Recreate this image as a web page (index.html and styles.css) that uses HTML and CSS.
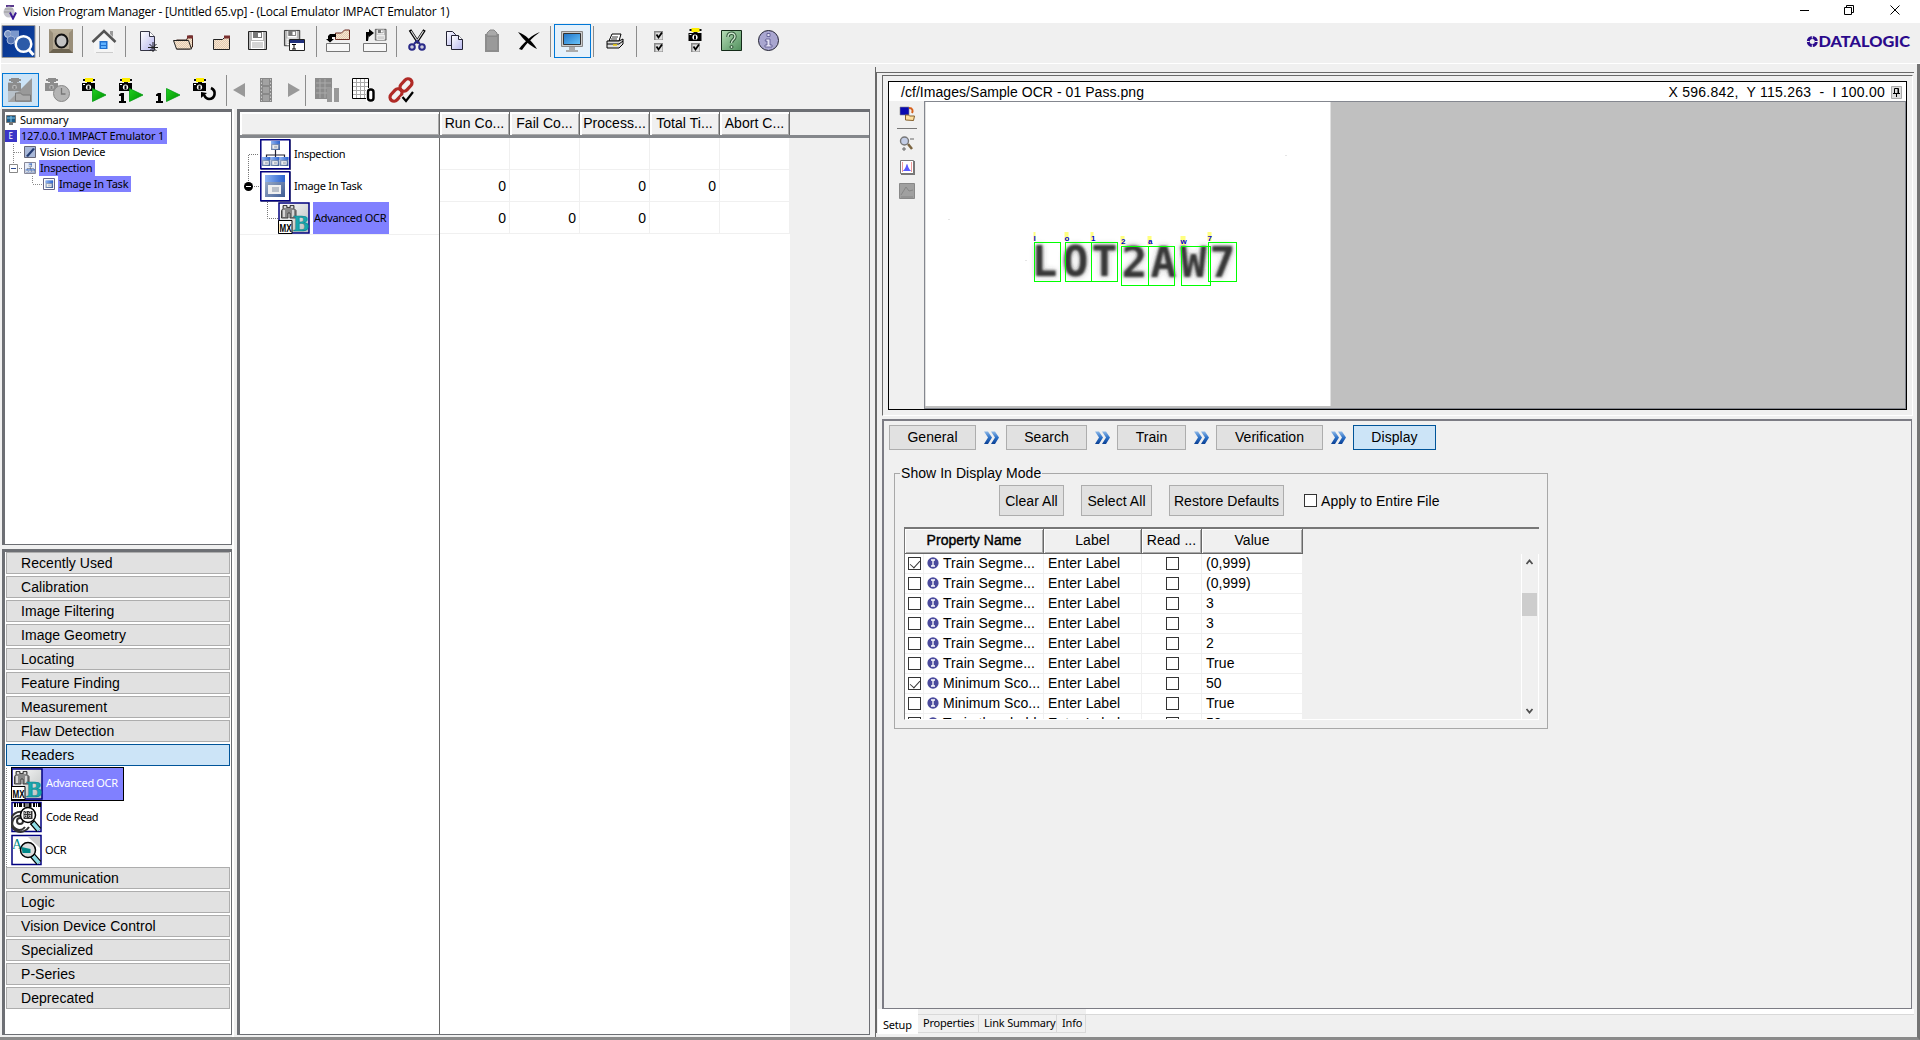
FILE: index.html
```html
<!DOCTYPE html>
<html lang="en">
<head>
<meta charset="utf-8">
<title>Vision Program Manager</title>
<link rel="stylesheet" href="styles.css">
</head>
<body>
<svg class="defs" width="0" height="0">
  <defs>
    <g id="cam">
      <path d="M1 1h12v2H1z" fill="#111"/><path d="M3 0h8v4H3z" fill="#ffef00"/>
      <path d="M5 4h4v1H5z" fill="#111"/><path d="M0 5h13v8H0z" fill="#000"/>
      <circle cx="6.5" cy="9.2" r="2.6" fill="#fff"/><path d="M5.5 7.5h2v4h-2z" fill="#000"/><path d="M1 6h2v1H1z" fill="#fff"/>
    </g>
    <g id="camgray">
      <path d="M1 1h12v2H1zM3 0h8v4H3zM5 4h4v1H5z" fill="#8c8c8c"/><path d="M0 5h13v8H0z" fill="#8c8c8c"/>
      <circle cx="6.5" cy="9.2" r="2.4" fill="#b8b8b8"/><path d="M5.5 8h2v3h-2z" fill="#808080"/>
    </g>
    <linearGradient id="greeng" x2="1" y2="1"><stop offset="0" stop-color="#20d020"/><stop offset="1" stop-color="#009000"/></linearGradient>
    <path id="play" d="M0.5 0.5L14 7L0.5 13.5z" fill="url(#greeng)" stroke="#009a10" stroke-width=".8"/>
    <path id="one" d="M2 0h3v8h2v2H0V8h2V3H0V1.500z" fill="#000"/>
    <g id="chk"><path d="M0 0h9v9H0z" fill="#888"/><path d="M1.500 1.500h7v7h-7z" fill="#ddd"/><path d="M2.500 3.500l2 3L8 1.500" stroke="#000" stroke-width="1.800" fill="none"/></g>
    <linearGradient id="winbody" x2="1" y2="1"><stop offset="0" stop-color="#a9b8cf"/><stop offset="1" stop-color="#3e5c94"/></linearGradient>
    <linearGradient id="winbar" x2="1"><stop offset="0" stop-color="#8fb4f2"/><stop offset="1" stop-color="#2a62cf"/></linearGradient>
    <g id="win"><path d="M0 0h20v22H0z" fill="url(#winbody)"/><path d="M0 0h20v7H0z" fill="url(#winbar)"/><path d="M3 10h13v9H3z" fill="#f0f0f0"/><path d="M7 12h7v5H7z" fill="#b9bfc8"/></g>
    <g id="tasks"><path d="M13.500 9v5M4.500 17v-3h18v3M13.500 14v3" fill="none" stroke="#223" stroke-width="1.200"/>
      <use href="#win" transform="translate(9 0) scale(.45 .41)"/><use href="#win" transform="translate(0 16) scale(.42 .41)"/><use href="#win" transform="translate(9 16) scale(.42 .41)"/><use href="#win" transform="translate(18 16) scale(.42 .41)"/></g>
    <linearGradient id="ocrbg" x2="1" y2="1"><stop offset="0" stop-color="#fff"/><stop offset="1" stop-color="#b9bdbd"/></linearGradient>
    <g id="mxocr">
      <path d="M1 1h30v30H1z" fill="url(#ocrbg)" stroke="#000080" stroke-width="1.500"/>
      <path d="M5 3.500h4v2h3v-2h4v3l2 2v7.500h-6v-5h-2v5H3.500V8.500l1.500-2z" fill="#888" stroke="#333" stroke-width=".9"/>
      <path d="M6 8v7M15 8v7M7 4v2M14 4v2" stroke="#eee" stroke-width="1.500"/>
      <text x="15" y="29" font-family="Liberation Serif" font-weight="bold" font-size="24" fill="#18a8ae" stroke="#0c7f88" stroke-width=".5">B</text>
      <path d="M.5 18.500h13.500v13H.5z" fill="#fff" stroke="#000"/>
      <text x="1.500" y="30" font-family="Liberation Sans" font-weight="bold" font-size="11" textLength="12" lengthAdjust="spacingAndGlyphs" fill="#000">MX</text>
    </g>
    <linearGradient id="chevg" x2="0" y2="1"><stop offset="0" stop-color="#8fb9e8"/><stop offset=".5" stop-color="#2a6fc6"/><stop offset="1" stop-color="#0a3f93"/></linearGradient>
    <g id="chev"><path d="M0 .5h4l4 6-4 6.500H0l4-6.500zM7 .5h4l4 6-4 6.500H7l4-6.500z" fill="url(#chevg)"/></g>
    <pattern id="dither" width="2" height="2" patternUnits="userSpaceOnUse"><path d="M0 0h2v2H0z" fill="#e3c9ad"/><path d="M0 0h1v1H0zM1 1h1v1H1z" fill="#f6e6d3"/></pattern>
    <linearGradient id="pageg" x2="1" y2="1"><stop offset="0" stop-color="#fff"/><stop offset="1" stop-color="#b5b5ee"/></linearGradient>
    <g id="floppy"><path d="M.5.500h18v18H.5z" fill="#b8b8b8" stroke="#222"/><path d="M4 1h11v8H4z" fill="#fff"/><path d="M5 1h9v6H5z" fill="#777"/><path d="M10 2h3v4h-3z" fill="#fff"/><path d="M3 10h13v8H3z" fill="#fff"/><path d="M4 12h11M4 14h11M4 16h11" stroke="#aaa"/></g>
    <g id="lens"><path d="M21 21l7 8" stroke="#000" stroke-width="6"/><path d="M22 22l6 7" stroke="#8fdde6" stroke-width="3.500"/></g>
    <g id="info"><ellipse cx="6" cy="6" rx="5.600" ry="5.800" fill="#4a4a9c"/><path d="M4 3h4M4 9h4M6 3v6" stroke="#fff" stroke-width="1.300"/></g>
  </defs>
</svg>

<header class="titlebar">
  <svg class="app" width="14" height="17" viewBox="3 3 14 17"><path d="M6 5h8v2H6z" fill="#5a3a8c"/><circle cx="9" cy="12" r="5.500" fill="#c4c4cc"/><path d="M5 9h8M4 12h7" stroke="#999"/><path d="M10 12.500l3 6 3-6" stroke="#3b1c94" stroke-width="2" fill="none"/></svg>
  <span class="title">Vision Program Manager - [Untitled 65.vp] - (Local Emulator IMPACT Emulator 1)</span>
  <svg class="wincontrols" width="120" height="23" viewBox="1800 0 120 23" fill="none" stroke="#000"><path d="M1799 10.500h10M1844.500 7.500h7v7h-7zM1846.500 7v-1.500h7v7H1852M1890.500 5.500l9 9M1899.500 5.500l-9 9"/></svg>
</header>

<nav class="toolbar top">
  <div class="grp"><svg viewBox="0 24 37 34"><defs><linearGradient id="lg" x2="1" y2="1"><stop offset="0" stop-color="#0a2f86"/><stop offset="1" stop-color="#0b46a8"/></linearGradient></defs><path d="M2 25.500h33v32H2z" fill="url(#lg)" stroke="#9a9a9a"/><circle cx="8" cy="34" r="3.500" fill="#7e97c6" stroke="#c8d4ea"/><path d="M11 30.500h8v8h-8z" fill="#7c98cc"/><circle cx="11" cy="40" r="4" fill="#5575b4" stroke="#9fb3da"/><circle cx="23.500" cy="44" r="7.800" fill="#2c5ba8" stroke="#fff" stroke-width="2.500"/><path d="M29 50l4.500 5" stroke="#fff" stroke-width="3"/></svg></div>
  <i></i>
  <div class="grp"><svg viewBox="42 24 37 34"><path d="M49 29h24v24H49z" fill="#9a8f7a"/><path d="M49 53l4-4h16l4 4z" fill="#6c6350"/><path d="M49 29l4 4h16l4-4z" fill="#b8ae98"/><path d="M53 33h16v16H53z" fill="#b4a994"/><ellipse cx="61.500" cy="41" rx="6" ry="6.500" fill="#c2c2c2" stroke="#111" stroke-width="2"/></svg></div>
  <i></i>
  <div class="grp"><svg viewBox="85 24 37 34"><path d="M94 41l10-9 10 9v12H94z" fill="#f5f5f5"/><path d="M110 31h3v6l-3-3z" fill="#999"/><path d="M92.500 42L104 31l11.500 11" fill="none" stroke="#555" stroke-width="2.500"/><path d="M99.500 41h8v8h-8z" fill="#1f6fd0"/><path d="M101 42.500h5v2.500h-5zM101 46h5v2h-5z" fill="#5fb2ff"/><path d="M96 52.500h17" stroke="#ccc"/></svg></div>
  <i></i>
  <div class="grp">
    <svg viewBox="129 24 37 34"><path d="M140.500 31.500h9l5 5v14h-14z" fill="url(#pageg)" stroke="#334"/><path d="M149.500 31.500v5h5" fill="#fff" stroke="#334"/><path d="M148 47.500h10M153 42v10M149.500 44l7 7M156.500 44l-7 7" stroke="#222"/></svg>
    <svg viewBox="166 24 37 34"><path d="M176.500 49v-9h10l2-4h4v11l-3 2z" fill="url(#dither)" stroke="#3b2018"/><path d="M173.500 40.500h15l3 8.500h-15z" fill="url(#dither)" stroke="#222"/><path d="M187 35.500h6v3h-6z" fill="#7a3030"/></svg>
    <svg viewBox="203 24 37 34"><path d="M213.500 49.500v-10h9l3-3h4v13z" fill="url(#dither)" stroke="#222"/><path d="M224 35.500h6v3h-6z" fill="#7a3030"/></svg>
    <svg viewBox="240 24 37 34"><use href="#floppy" x="248" y="31"/></svg>
    <svg viewBox="277 24 37 34"><use href="#floppy" transform="translate(284 30) scale(.85)"/><path d="M289.500 39.500h15v11h-15z" fill="#fff" stroke="#222"/><path d="M290 40h14v3h-14z" fill="#20307c"/><path d="M292 44.500h4M292 49h4M294 44v5" stroke="#000"/></svg>
  </div>
  <i></i>
  <div class="grp">
    <svg viewBox="318 24 37 34"><path d="M326.500 43.500h23v8h-23z" fill="#f6f6f6" stroke="#777"/><path d="M335.500 39.500V33h6l3-3h5v9.500z" fill="url(#dither)" stroke="#6b2b20"/><path d="M330 34h6v3h-4v2h2l-4 3.500-4-3.500h2v-3z" fill="#000"/></svg>
    <svg viewBox="355 24 37 34"><path d="M363.500 43.500h23v8h-23z" fill="#f6f6f6" stroke="#777"/><use href="#floppy" transform="translate(375 29) scale(.6)"/><path d="M366 41v-9h3v-3l5 4-5 4v-2l-1 6z" fill="#000"/></svg>
  </div>
  <i></i>
  <div class="grp">
    <svg viewBox="399 24 37 34"><path d="M410 30l8.500 13M424.500 30L416 43" stroke="#000" stroke-width="3"/><path d="M411 31l6.500 10M423.500 31L417 41" stroke="#ddd" stroke-width="1.200"/><g fill="#ccd" stroke="#2a2a88" stroke-width="2"><circle cx="412" cy="47" r="2.800"/><circle cx="422" cy="47" r="2.800"/></g><path d="M414 44l3-3 3 3" stroke="#2a2a88" stroke-width="2" fill="none"/></svg>
    <svg viewBox="436 24 37 34"><g fill="url(#pageg)" stroke="#223"><path d="M446.500 31.500h6l3 3v11h-9z"/><path d="M451.500 35.500h7l4 4v10h-11z"/><path d="M458.500 35.500v4h4" fill="#fff"/></g></svg>
    <svg viewBox="473 24 37 34"><path d="M485 34h14v18h-14z" fill="#8d8d8d"/><path d="M487 36v-3l3-3h4l3 3v3z" fill="#aaa" stroke="#888"/><path d="M487 37h10v13h-10z" fill="#9a9a9a"/></svg>
    <svg viewBox="510 24 37 34"><path d="M518 32c8 3 14 9 19 17-7-3-14-10-19-17z" fill="#000"/><path d="M519 49c6-8 13-14 21-17-8 6-13 11-18 18z" fill="#000"/></svg>
  </div>
  <i></i>
  <div class="grp"><svg class="hot" viewBox="554 24 37 34"><path d="M561.500 31.500h21v15h-21z" fill="#ccc" stroke="#888"/><linearGradient id="mon" x2="1" y2="1"><stop offset="0" stop-color="#1e73c8"/><stop offset="1" stop-color="#6cc6fa"/></linearGradient><path d="M563.500 33.500h17v11h-17z" fill="url(#mon)" stroke="#333"/><path d="M569 47h6v3h3v2h-12v-2h3z" fill="#aaa"/></svg></div>
  <i></i>
  <div class="grp"><svg viewBox="596 24 37 34"><path d="M609 41l3-7h9l-2 7z" fill="#fff" stroke="#000"/><path d="M612 37h6M611 39h6" stroke="#000" stroke-width=".8"/><path d="M607 41h12l4-2v5l-4 4h-12z" fill="#ddd" stroke="#000"/><path d="M607 44h12l4-3" stroke="#000" fill="none"/><path d="M613 45h4" stroke="#ec0" stroke-width="1.500"/></svg></div>
  <i></i>
  <div class="grp">
    <svg viewBox="639 24 37 34"><use href="#chk" x="654" y="31"/><use href="#chk" x="654" y="43"/></svg>
    <svg viewBox="676 24 37 34"><use href="#cam" x="688.500" y="28"/><use href="#chk" x="691" y="43"/></svg>
    <svg viewBox="713 24 37 34"><linearGradient id="hg" x2="1" y2="1"><stop offset="0" stop-color="#b6dcb6"/><stop offset="1" stop-color="#4f8f5c"/></linearGradient><path d="M721.500 30.500h20v20h-20z" fill="url(#hg)" stroke="#132a18"/><path d="M728 37c0-5 7-5 7-.5 0 3.500-3.500 3-3.500 6.500" fill="none" stroke="#2d5236" stroke-width="3.400"/><path d="M728 37c0-5 7-5 7-.5 0 3.500-3.500 3-3.500 6.500" fill="none" stroke="#cfe8cf" stroke-width="1.400"/><circle cx="731.500" cy="47" r="1.500" fill="#cfe8cf" stroke="#2d5236"/></svg>
    <svg viewBox="750 24 37 34"><circle cx="768.500" cy="40.500" r="10" fill="#a9a6d0" stroke="#223"/><path d="M766 39h4v6h2v2h-7v-2h2v-4h-2zM767 33.500h3v3h-3z" fill="#e4e2f6" stroke="#55538c" stroke-width=".8"/></svg>
  </div>
  <svg class="brand" width="106" height="20" viewBox="1805 31 106 20"><circle cx="1812.300" cy="41.500" r="4" fill="none" stroke="#2b0a8c" stroke-width="3"/><path d="M1806.500 41.500h3M1815 41.500h3M1812.300 35.500v3M1812.300 44.500v3" stroke="#f0f0f0" stroke-width="1"/><text x="1818.500" y="47" font-family="Lato" font-weight="900" font-size="15.500" textLength="91.500" lengthAdjust="spacingAndGlyphs" fill="#2b0a8c">DATALOGIC</text></svg>
</nav>

<main class="main">
  <section class="leftside">
    <nav class="toolbar second">
      <div class="grp">
        <svg class="sel" viewBox="2 73 37 34"><path d="M8 102L32 78v24z" fill="#999"/><path d="M8 82h12v20H8z" fill="#aaa" opacity=".6"/><use href="#camgray" x="8" y="78"/><path d="M15.500 101v-8h5l2 2h8v6z" fill="#ababab" stroke="#777"/></svg>
        <svg viewBox="39 73 37 34"><use href="#camgray" x="45" y="78"/><circle cx="61.500" cy="93.500" r="8" fill="#b4b4b4" stroke="#888"/><path d="M61.500 88v6h4" stroke="#777" fill="none" stroke-width="1.300"/></svg>
        <svg viewBox="76 73 37 34"><use href="#cam" x="82" y="78"/><use href="#play" x="92" y="88"/></svg>
        <svg viewBox="113 73 37 34"><use href="#cam" x="119" y="78"/><use href="#one" x="119" y="93"/><use href="#play" x="129" y="88"/></svg>
        <svg viewBox="150 73 37 34"><use href="#one" x="156" y="93"/><use href="#play" x="166" y="88"/></svg>
        <svg viewBox="187 73 37 34"><use href="#cam" x="193" y="78"/><path d="M211 88c6 3 4 11-2 11-2 0-4-2-5-4" fill="none" stroke="#000" stroke-width="2.600"/><path d="M201 98v-6l6 1z" fill="#000"/></svg>
      </div>
      <i></i>
      <div class="grp film">
        <svg viewBox="226 73 27 34"><path d="M245 83v14l-12-7z" fill="#999"/></svg>
        <svg viewBox="253 73 27 34"><path d="M260 78h12v24h-12z" fill="#888"/><path d="M263 79h6v6h-6zM263 87h6v6h-6zM263 95h6v6h-6z" fill="#a2a2a2"/><path d="M261.500 79v22M270.500 79v22" stroke="#ccc" stroke-dasharray="1.500 2"/></svg>
        <svg viewBox="280 73 24 34"><path d="M288 83v14l12-7z" fill="#999"/></svg>
      </div>
      <i></i>
      <div class="grp">
        <svg viewBox="308 73 37 34"><path d="M315 78h17v21h-17z" fill="#8b8b8b"/><path d="M316 83h15M316 88h15M316 93h15M320 79v19M325 79v19" stroke="#aaa"/><path d="M327 88h5v14h-5zM334 88h5v14h-5z" fill="#999"/></svg>
        <svg viewBox="345 73 37 34"><path d="M352.500 78.500h16v20h-16z" fill="#fff" stroke="#000"/><path d="M353 82.500h15M353 86.500h15M353 90.500h15M353 94.500h15M356.500 79v19M360.500 79v19M364.500 79v19" stroke="#aaa"/><path d="M366 88h8v14h-8z" fill="#fff"/><rect x="368" y="89.500" width="5.500" height="11" rx="2.500" fill="#fff" stroke="#000" stroke-width="2.400"/></svg>
        <svg viewBox="382 73 37 34"><g fill="none" stroke="#b02a26" stroke-width="3.200"><rect x="-7" y="-4" width="14" height="8" rx="4" transform="translate(406 85) rotate(-48)"/><rect x="-7" y="-4" width="14" height="8" rx="4" transform="translate(396 95) rotate(-48)"/></g><path d="M402 96l4 5 7-9" fill="none" stroke="#f0f0f0" stroke-width="5"/><path d="M402.500 97l3.500 4 7-9" fill="none" stroke="#000" stroke-width="2.200"/></svg>
      </div>
    </nav>
    <div class="panels">
      <aside class="sidebar">
        <ul class="devtree sunken tahoma">
          <li><svg width="14" height="16" viewBox="5 112 14 16"><path d="M6.500 115.500h9v7h-9z" fill="#1c5a86" stroke="#777"/><path d="M7 118h8M11 116v6" stroke="#7fc4ea"/><path d="M9 123h4v2H9z" fill="#777"/></svg><span>Summary</span></li>
          <li><svg width="15" height="16" viewBox="5 128 15 16"><path d="M5 130h12v12H5z" fill="#3a34c8"/><text x="8.500" y="139" font-size="8" fill="#fff" font-family="Noto Sans">E</text></svg><span class="hl">127.0.0.1 IMPACT Emulator 1</span></li>
          <li><svg width="34" height="16" viewBox="5 144 34 16"><path d="M13.500 144v16M14 152.500h8" stroke="#888" stroke-dasharray="1 1"/><path d="M24.500 146.500h11v11h-11z" fill="#a8b8d8" stroke="#667"/><path d="M26 156l7-8 2 1-7 8z" fill="#223a70"/></svg><span>Vision Device</span></li>
          <li><svg width="34" height="16" viewBox="5 160 34 16"><path d="M13.500 160v4M19 168.500h4" stroke="#888" stroke-dasharray="1 1"/><path d="M9.500 164.500h8v8h-8z" fill="#fff" stroke="#888"/><path d="M11 168.500h5" stroke="#2b4a90"/><path d="M24.500 162.500h11v11h-11z" fill="#e8eefa" stroke="#889"/><use href="#tasks" transform="translate(25.500 163.500) scale(.36)"/></svg><span class="hl">Inspection</span></li>
          <li><svg width="53" height="16" viewBox="5 176 53 16"><path d="M32.500 176v8M33 184.500h9" stroke="#888" stroke-dasharray="1 1"/><path d="M43.500 178.500h11v11h-11z" fill="#fff" stroke="#668"/><use href="#win" transform="translate(45.500 180.500) scale(.38 .34)"/></svg><span class="hl">Image In Task</span></li>
        </ul>
        <div class="toolbox sunken">
          <button>Recently Used</button><button>Calibration</button><button>Image Filtering</button><button>Image Geometry</button><button>Locating</button><button>Feature Finding</button><button>Measurement</button><button>Flaw Detection</button><button class="open">Readers</button>
          <ul class="readers tahoma">
            <li class="active"><svg width="35" height="32" viewBox="0 0 35 32"><use href="#mxocr"/></svg><span>Advanced OCR</span></li>
            <li><svg width="35" height="33" viewBox="0 0 35 33"><path d="M1 1.500h29v29H1z" fill="#fff" stroke="#000080" stroke-width="1.500"/><path d="M3 4h27" stroke="#000" stroke-width="4" stroke-dasharray="2 1 1 1 3 1.500"/><g fill="none" stroke="#333" stroke-width="2"><circle cx="9" cy="20" r="3"/><path d="M18 26a10 10 0 1 1-7-15M14 26a7 7 0 1 1-4-11"/></g><use href="#lens"/><circle cx="17" cy="14" r="7.500" fill="#fff" stroke="#000" stroke-width="1.500"/><path d="M12.500 10h9v8h-9z" fill="#333"/><path d="M13 12h8M13 15h8M15 10v8M19 10v8" stroke="#fff" stroke-dasharray="1 1"/></svg><span>Code Read</span></li>
            <li><svg width="34" height="33" viewBox="0 0 34 33"><path d="M1 1.500h29v29H1z" fill="#fff" stroke="#000080" stroke-width="1.500"/><path d="M17 3h12v11z" fill="#ccc"/><text x="1" y="15" font-family="Liberation Serif" font-size="14" fill="#088">A</text><use href="#lens"/><circle cx="17" cy="16" r="7.500" fill="#ddd" stroke="#000" stroke-width="1.500"/><path d="M10.500 13l9 2v4h-8z" fill="#088"/></svg><span>OCR</span></li>
          </ul>
          <button>Communication</button><button>Logic</button><button>Vision Device Control</button><button>Specialized</button><button>P-Series</button><button>Deprecated</button>
        </div>
      </aside>
      <div class="program">
        <div class="prow phead"><div class="c0"></div><div>Run Co...</div><div>Fail Co...</div><div>Process...</div><div>Total Ti...</div><div>Abort C...</div></div>
        <div class="pbody">
          <ul class="steps tahoma">
            <li><svg width="54" height="32" viewBox="240 138 54 32"><path d="M248.500 170v-15.500h10" fill="none" stroke="#777" stroke-dasharray="1 1"/><path d="M261 140h30v30h-30z" fill="#888"/><path d="M260.800 139.800h29v29h-29z" fill="#fff" stroke="#000080" stroke-width="1.500"/><use href="#tasks" x="262" y="141"/></svg><span>Inspection</span></li>
            <li><svg width="54" height="32" viewBox="240 170 54 32"><path d="M248.500 170v13M252 186.500h8" fill="none" stroke="#777" stroke-dasharray="1 1"/><circle cx="248.500" cy="186.500" r="4.500" fill="#000"/><path d="M246 186.500h5" stroke="#fff"/><path d="M261 172h30v30h-30z" fill="#888"/><path d="M260.800 171.800h29v29h-29z" fill="#fff" stroke="#000080" stroke-width="1.500"/><use href="#win" x="265" y="175"/></svg><span>Image In Task</span></li>
            <li><svg width="73" height="32" viewBox="240 202 73 32"><path d="M267.500 202v16.500h11" fill="none" stroke="#777" stroke-dasharray="1 1"/><use href="#mxocr" x="278" y="202"/></svg><span class="hl">Advanced OCR</span></li>
          </ul>
          <div class="stats">
            <div class="srow"><b></b><b></b><b></b><b></b><b></b></div>
            <div class="srow"><b>0</b><b></b><b>0</b><b>0</b><b></b></div>
            <div class="srow"><b>0</b><b>0</b><b>0</b><b></b><b></b></div>
          </div>
        </div>
      </div>
    </div>
  </section>

  <section class="rightside">
    <div class="frame">
      <div class="preview"><div class="viewer">
        <div class="vhead"><span>/cf/Images/Sample OCR - 01 Pass.png</span><span class="coords">X 596.842,&nbsp; Y 115.263&nbsp; -&nbsp; I 100.00</span><svg width="11" height="13" viewBox="0 0 11 13"><path d="M.5.500h10v12H.5z" fill="#ddd" stroke="#aaa"/><path d="M3.500 7V2.500h4V7M2 7.500h7M5.500 8v3M7 3v4" stroke="#000" fill="none"/></svg></div>
        <div class="vbody">
          <div class="vtools">
            <svg width="18" height="17" viewBox="899 106 18 17"><path d="M900 107h9v8h-9z" fill="#0a0ab0" stroke="#888" stroke-width=".6"/><path d="M909 108c4 0 4 3 3 5" stroke="#d6601c" stroke-width="2" fill="none"/><path d="M905.500 120v-5h3l1 1h5l-1 4.500z" fill="#ffe0a0" stroke="#85602c"/></svg>
            <hr>
            <svg width="18" height="17" viewBox="899 135 18 17"><path d="M908 144l4 5" stroke="#7b6440" stroke-width="2.500"/><circle cx="904.500" cy="141" r="4" fill="#c3cde6" stroke="#777" stroke-width="1.400"/><path d="M910 139h4M902 149h4M904 147v4" stroke="#666"/></svg>
            <svg width="18" height="17" viewBox="899 159 18 17"><path d="M901 161h14v14h-14z" fill="#777"/><path d="M900.500 160.500h13v13h-13z" fill="#fff" stroke="#777"/><path d="M902 171c4-1 4-7 5-7s1 6 5 7z" fill="#5a5aff"/><path d="M902.500 162v10M911.500 162v10" stroke="#e99"/></svg>
            <svg width="18" height="17" viewBox="899 184 18 17"><path d="M899.500 184.500h15v15h-15z" fill="#a0a0a0" stroke="#888"/><path d="M901 196l5-8 3 4 4-1M901 198h12" fill="none" stroke="#868686"/></svg>
          </div>
          <div class="canvas">
            <svg width="405" height="305" viewBox="926 102 405 305">
              <defs><filter id="soft" x="-10%" y="-30%" width="120%" height="160%"><feGaussianBlur in="SourceGraphic" stdDeviation="3" result="wide"/><feComponentTransfer in="wide" result="halo"><feFuncA type="linear" slope=".35"/></feComponentTransfer><feGaussianBlur in="SourceGraphic" stdDeviation=".9" result="ink"/><feMerge><feMergeNode in="halo"/><feMergeNode in="ink"/></feMerge></filter></defs>
              <path d="M926 102h405v304H926z" fill="#fff"/>
              <g class="print" filter="url(#soft)"><text x="1032" y="276">L</text><text x="1063" y="276">O</text><text x="1092" y="276">T</text><text x="1122" y="277">2</text><text x="1151" y="277">A</text><text x="1181" y="277">W</text><text x="1210" y="277">7</text></g>
              <g fill="none" stroke="#0f0" shape-rendering="crispEdges"><path d="M1034.500 242.500h26v39h-26zM1065.500 242.500h26v39h-26zM1091.500 242.500h26v39h-26zM1121.500 246.500h27v39h-27zM1148.500 246.500h26v39h-26zM1181.500 246.500h29v39h-29zM1208.500 242.500h28v39h-28z"/></g>
              <path d="M1034 232h2v9h-2zM1065 232h4v9h-4zM1091 232h3v9h-3zM1121 236h4v9h-4zM1148 236h4v9h-4zM1181 236h5v9h-5zM1208 232h4v9h-4z" fill="#ffff80"/>
              <g class="tags"><text x="1034" y="241">l</text><text x="1065" y="241">o</text><text x="1091.500" y="241">1</text><text x="1121.500" y="244">2</text><text x="1148.500" y="244">a</text><text x="1181" y="244">w</text><text x="1208" y="241">7</text></g>
              <path d="M949 219h1v1h-1zM1026 260h1v1h-1zM1286 155h1v1h-1z" fill="#ccc"/>
            </svg>
          </div>
        </div>
      </div></div>
      <div class="setup">
        <div class="steps-nav"><button class="w1">General</button><svg><use href="#chev"/></svg><button class="w2">Search</button><svg><use href="#chev"/></svg><button class="w3">Train</button><svg><use href="#chev"/></svg><button class="w4">Verification</button><svg><use href="#chev"/></svg><button class="w5 open">Display</button></div>
        <fieldset>
          <legend>Show In Display Mode</legend>
          <div class="actions"><button class="a1">Clear All</button><button class="a2">Select All</button><button class="a3">Restore Defaults</button><label><i class="box"></i>Apply to Entire File</label></div>
          <div class="props">
            <div class="ptable">
              <div class="trow thead"><div class="n">Property Name</div><div>Label</div><div>Read ...</div><div>Value</div></div>
              <div class="trow"><div><i class="box on"></i></div><div class="nm"><svg><use href="#info"/></svg>Train Segme...</div><div>Enter Label</div><div class="ro"><i class="box"></i></div><div>(0,999)</div></div>
              <div class="trow"><div><i class="box"></i></div><div class="nm"><svg><use href="#info"/></svg>Train Segme...</div><div>Enter Label</div><div class="ro"><i class="box"></i></div><div>(0,999)</div></div>
              <div class="trow"><div><i class="box"></i></div><div class="nm"><svg><use href="#info"/></svg>Train Segme...</div><div>Enter Label</div><div class="ro"><i class="box"></i></div><div>3</div></div>
              <div class="trow"><div><i class="box"></i></div><div class="nm"><svg><use href="#info"/></svg>Train Segme...</div><div>Enter Label</div><div class="ro"><i class="box"></i></div><div>3</div></div>
              <div class="trow"><div><i class="box"></i></div><div class="nm"><svg><use href="#info"/></svg>Train Segme...</div><div>Enter Label</div><div class="ro"><i class="box"></i></div><div>2</div></div>
              <div class="trow"><div><i class="box"></i></div><div class="nm"><svg><use href="#info"/></svg>Train Segme...</div><div>Enter Label</div><div class="ro"><i class="box"></i></div><div>True</div></div>
              <div class="trow"><div><i class="box on"></i></div><div class="nm"><svg><use href="#info"/></svg>Minimum Sco...</div><div>Enter Label</div><div class="ro"><i class="box"></i></div><div>50</div></div>
              <div class="trow"><div><i class="box"></i></div><div class="nm"><svg><use href="#info"/></svg>Minimum Sco...</div><div>Enter Label</div><div class="ro"><i class="box"></i></div><div>True</div></div>
              <div class="trow"><div><i class="box"></i></div><div class="nm"><svg><use href="#info"/></svg>Train threshold</div><div>Enter Label</div><div class="ro"><i class="box"></i></div><div>50</div></div>
            </div>
            <svg class="scroll" width="18" height="166" viewBox="1521 555 18 166"><path d="M1521 555v166M1539 555v166" stroke="#fff" stroke-width="2"/><path d="M1522 594h15v23h-15z" fill="#cdcdcd"/><path d="M1526.500 565l3-3.500 3 3.500M1526.500 710l3 3.500 3-3.500" fill="none" stroke="#505050" stroke-width="1.800"/></svg>
          </div>
        </fieldset>
      </div>
      <div class="tabs tahoma"><span class="cur">Setup</span><span class="t2">Properties</span><span class="t3">Link Summary</span><span class="t4">Info</span><em></em></div>
    </div>
  </section>
</main>
</body>
</html>
```
FILE: styles.css
```css
* { box-sizing: border-box; }
body { margin: 0; width: 1920px; height: 1040px; overflow: hidden; display: flex; flex-direction: column; background: #f0f0f0; color: #000; font: 14px "Liberation Sans", Arial, sans-serif; letter-spacing: .05px; }
ul { margin: 0; padding: 0; list-style: none; }
svg { display: block; flex: none; letter-spacing: 0; }
.defs { position: absolute; }
button { font: inherit; letter-spacing: inherit; color: #000; background: #e1e1e1; border: 1px solid #adadad; border-radius: 0; padding: 0; white-space: nowrap; }
button.open { background: #cce4f7; border-color: #005499; }
.tahoma { font: 11px "Noto Sans", sans-serif; letter-spacing: -0.2px; white-space: nowrap; }
.hl { background: #8080ff; }

.titlebar { height: 23px; background: #fff; display: flex; flex: none; }
.app { margin: 3px 6px 0 3px; }
.title { flex: 1; font: 12px/24px "Open Sans", sans-serif; letter-spacing: -0.24px; white-space: nowrap; }

.toolbar { display: flex; border-left: 1px solid #fff; flex: none; }
.toolbar i { width: 1px; height: 31px; background: #8c8c8c; margin: 2px 2px 0 2px; }
.toolbar .grp { display: flex; }
.toolbar .grp svg { width: 37px; height: 34px; }
.toolbar.top { height: 41px; padding-top: 1px; border-bottom: 1px solid #fff; }
.top .grp:first-child { margin-left: -1px; }
.top i:nth-of-type(2) { margin-left: 3px; }
.top i:nth-of-type(3) { margin: 2px 3px 0; }
.top i:nth-of-type(4) { margin-right: 1px; }
.top i:nth-of-type(5) { margin-left: 4px; }
.top i:nth-of-type(6) { margin: 2px 3px 0; }
.top i:nth-of-type(8) { margin-left: 3px; }
.hot { background: #e5f1fb; outline: 1px solid #0078d7; outline-offset: -1px; }
.sel { background: #cce4f7; outline: 1px solid #0078d7; outline-offset: -1px; }
.brand { margin: 7px 9px 0 auto; }

.main { flex: 1; display: flex; min-height: 0; border-right: 3px solid #747474; border-bottom: 3px solid #8a8a8a; }
.leftside { width: 870px; flex: none; display: flex; flex-direction: column; }
.second { height: 45px; padding: 9px 0 0 1px; }
.second .film { margin-left: -3px; }
.second .film svg { width: 27px; }
.second .film svg:last-child { width: 24px; }
.second i:nth-of-type(2) { margin-left: 1px; }
.panels { flex: 1; display: flex; min-height: 0; }
.sunken { background: #fff; border: solid #6d6f74; border-width: 3px 1px 1px 3px; }
.sidebar { width: 232px; margin-left: 2px; display: flex; flex-direction: column; border-right: 2px solid #fff; }
.devtree { height: 436px; flex: none; }
.devtree li { display: flex; height: 16px; }
.devtree span { line-height: 16px; padding: 0 1px; height: 16px; }
.devtree .hl { padding: 0 3px 0 1px; }
.toolbox { margin-top: 4px; height: 486px; padding: 0 1px; display: flex; flex-direction: column; }
.toolbox button { height: 22px; line-height: 20px; margin: 0 0 2px 0; padding-left: 14px; text-align: left; flex: none; }
.readers { height: 99px; flex: none; padding-left: 4px; border-left: 1px dotted #888; letter-spacing: -0.35px; }
.readers li { height: 33px; display: flex; align-items: center; }
.readers span { padding: 0 0 3px 0; }
.readers .active { width: 113px; height: 34px; background: #8080ff; color: #fff; outline: 1px solid #000; outline-offset: -1px; margin-top: -1px; }

.program { flex: 1; margin-left: 3px; border: solid #6d6f74; border-width: 3px 1px 1px 3px; display: flex; flex-direction: column; height: 926px; min-width: 0; }
.phead { display: flex; height: 26px; flex: none; border-bottom: 3px solid #84878b; }
.phead div { width: 70px; line-height: 22px; text-align: center; border-right: 1px solid #696969; box-shadow: inset 2px 2px #fff, inset -1px -1px #aaa; }
.phead .c0 { width: 200px; }
.pbody { flex: 1; display: flex; }
.steps { width: 200px; background: #fff; border-right: 1px solid #696969; letter-spacing: -0.3px; }
.steps li { display: flex; height: 32px; line-height: 31px; }
.steps li:last-child { height: 33px; border-bottom: 1px solid #f0f0f0; }
.steps .hl { height: 32px; width: 76px; padding-left: 1px; }
.stats { width: 350px; background: #fff; }
.srow { display: flex; height: 32px; }
.srow b { width: 70px; font-weight: normal; text-align: right; padding-right: 3px; line-height: 33px; border: solid #f0f0f0; border-width: 0 1px 1px 0; }

.rightside { flex: 1; margin: 3px 3px 0 5px; padding-top: 5px; border-left: 1px solid #696969; }
.frame { border: solid #696969; border-width: 1px 0 0 1px; padding: 2px 0 0 5px; height: 961px; }
.preview { width: 1031px; height: 341px; padding: 5px; border: 1px solid #696969; border-right-color: #fff; border-bottom-color: #fff; }
.viewer { width: 1019px; height: 329px; border: 1px solid #000; }
.vhead { background: #fff; height: 19px; line-height: 19px; padding: 1px 4px 0 12px; display: flex; align-items: center; }
.coords { margin: 0 6px 0 auto; letter-spacing: .23px; }
.vbody { display: flex; height: 308px; }
.vtools { width: 35px; padding: 5px 0 0 10px; }
.vtools svg { margin-bottom: 7px; }
.vtools svg:first-child { margin-bottom: 5px; }
.vtools hr { margin: 0 0 6px -2px; width: 20px; height: 1px; border: 0; background: #777; }
.canvas { flex: 1; background: #c0c0c0; border: 1px solid #84878f; }
.canvas svg { width: 406px; height: 305px; }
.print text { font: bold 43px "DejaVu Sans Mono", monospace; fill: #383838; }
.tags text { font: bold 8px "Liberation Sans", sans-serif; fill: #00c; }

.setup { margin-top: 3px; width: 1030px; height: 590px; border: solid #7c7c84; border-width: 2px 1px 1px 2px; padding: 4px 5px; }
.steps-nav { display: flex; align-items: center; height: 25px; }
.steps-nav svg { width: 15px; height: 14px; margin: 0 7px 0 8px; }
.steps-nav button { height: 25px; line-height: 22px; padding-bottom: 1px; }
.w1 { width: 87px; } .w2 { width: 81px; } .w3 { width: 69px; } .w4 { width: 107px; } .w5 { width: 83px; }
fieldset { margin: 15px 0 0 5px; width: 654px; height: 264px; border: 1px solid #a8a8a8; padding: 0; }
legend { margin-left: 5px; padding: 0 1px; line-height: 17px; height: 17px; }
.actions { display: flex; margin: 3px 0 0 104px; height: 31px; align-items: center; }
.actions button { height: 31px; margin-right: 17px; }
.a1 { width: 65px; } .a2 { width: 71px; } .a3 { width: 115px; }
label { display: flex; align-items: center; gap: 4px; margin-left: 3px; }
.box { display: block; width: 13px; height: 13px; background: #fff; border: 1px solid #333; flex: none; }
.box.on::after { content: ""; display: block; width: 9px; height: 5px; margin: 2px 0 0 1px; border: solid #333; border-width: 0 0 1.4px 1.4px; transform: rotate(-48deg) scale(.95); }
.props { margin: 11px 0 0 9px; width: 635px; height: 193px; border: solid #777; border-width: 2px 0 0 1px; border-bottom: 1px solid #fff; display: flex; justify-content: space-between; overflow: hidden; }
.ptable { width: 398px; overflow: hidden; }
.trow { display: grid; grid-template-columns: 19px 120px 98px 60px 101px; height: 20px; background: #fff; line-height: 19px; white-space: nowrap; }
.trow > div { border: solid #f0f0f0; border-width: 0 1px 1px 0; padding-left: 4px; overflow: hidden; }
.trow > div:first-child { padding-left: 3px; }
.trow .box { margin-top: 3px; }
.trow .nm { display: flex; padding-left: 3px; }
.nm svg { width: 12px; height: 12px; margin: 3px 4px 0 0; }
.trow .ro { padding-left: 24px; }
.thead { height: 25px; background: #f0f0f0; line-height: 23px; }
.trow.thead > div { text-align: center; padding: 0; border: 0; border-right: 1px solid #696969; border-bottom: 1px solid #696969; box-shadow: inset 1px 1px #fff, inset -1px -1px #aaa; }
.thead .n { grid-column: span 2; -webkit-text-stroke: .4px #000; }
.scroll { margin-top: 25px; }

.tabs { display: flex; height: 28px; margin-left: -4px; }
.tabs span { line-height: 15px; height: 19px; margin-top: 5px; border: solid #d9d9d9; border-width: 1px 1px 1px 0; padding-left: 5px; }
.tabs .cur { background: #fff; margin: 0; width: 40px; height: 25px; line-height: 31px; border: 0; padding-left: 5px; }
.t2 { width: 61px; } .t3 { width: 78px; } .t4 { width: 29px; }
.tabs em { flex: 1; border-top: 5px solid #fff; box-shadow: inset 0 1px #d9d9d9; }
```
